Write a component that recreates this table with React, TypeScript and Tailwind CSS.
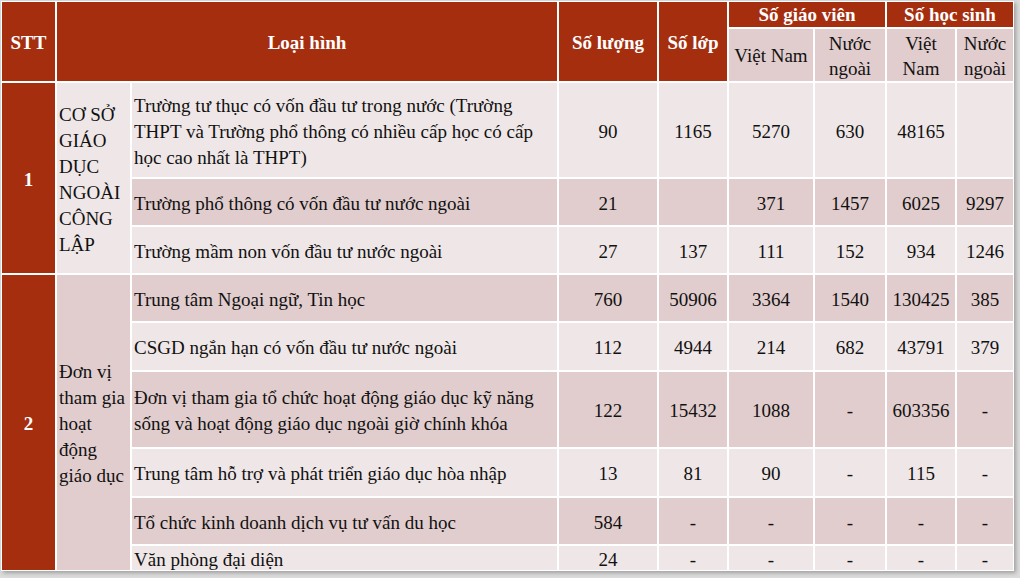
import React from "react";

const RED = "bg-[#a52e0f]";
const LIGHT = "bg-[#efe7e7]";
const DARK = "bg-[#e1cdcd]";

type Row = { name: React.ReactNode; vals: string[]; dark: boolean };

const sec1: Row[] = [
  {
    name: (
      <>
        Trường tư thục có vốn đầu tư trong nước (Trường
        <br />
        THPT và Trường phổ thông có nhiều cấp học có cấp
        <br />
        học cao nhất là THPT)
      </>
    ),
    vals: ["90", "1165", "5270", "630", "48165", ""],
    dark: false,
  },
  { name: "Trường phổ thông có vốn đầu tư nước ngoài", vals: ["21", "", "371", "1457", "6025", "9297"], dark: true },
  { name: "Trường mầm non vốn đầu tư nước ngoài", vals: ["27", "137", "111", "152", "934", "1246"], dark: false },
];

const sec2: Row[] = [
  { name: "Trung tâm Ngoại ngữ, Tin học", vals: ["760", "50906", "3364", "1540", "130425", "385"], dark: true },
  { name: "CSGD ngắn hạn có vốn đầu tư nước ngoài", vals: ["112", "4944", "214", "682", "43791", "379"], dark: false },
  {
    name: (
      <>
        Đơn vị tham gia tổ chức hoạt động giáo dục kỹ năng
        <br />
        sống và hoạt động giáo dục ngoài giờ chính khóa
      </>
    ),
    vals: ["122", "15432", "1088", "-", "603356", "-"],
    dark: true,
  },
  { name: "Trung tâm hỗ trợ và phát triển giáo dục hòa nhập", vals: ["13", "81", "90", "-", "115", "-"], dark: false },
  { name: "Tổ chức kinh doanh dịch vụ tư vấn du học", vals: ["584", "-", "-", "-", "-", "-"], dark: true },
  { name: "Văn phòng đại diện", vals: ["24", "-", "-", "-", "-", "-"], dark: false },
];

function RowCells({ r }: { r: Row }) {
  const bg = r.dark ? DARK : LIGHT;
  return (
    <>
      <div className={`${bg} flex items-center pl-[2px] pt-[3px] whitespace-nowrap`}>
        <span>{r.name}</span>
      </div>
      {r.vals.map((v, i) => (
        <div key={i} className={`${bg} flex items-center justify-center pt-[3px]`}>
          {v}
        </div>
      ))}
    </>
  );
}

export default function App() {
  return (
    <div className="w-[1020px] h-[578px] bg-[#dcdcdc] pt-[1px] pl-[1px] overflow-hidden">
      <div className="inline-grid bg-white p-[1px] gap-[2px] shadow-[2px_2px_4px_rgba(0,0,0,0.28)] grid-cols-[53px_73px_425px_98px_68px_84px_70px_68px_56px] grid-rows-[25px_52px_94px_46px_46px_46px_47px_75px_47px_46px_24px] text-[19px] leading-[26px] text-[#111] font-['Liberation_Serif','Times_New_Roman',serif]">
        {/* Header */}
        <div className={`${RED} row-span-2 flex items-center justify-center pt-[2px] text-white font-bold`}>STT</div>
        <div className={`${RED} row-span-2 col-span-2 flex items-center justify-center pt-[2px] text-white font-bold`}>
          Loại hình
        </div>
        <div className={`${RED} row-span-2 flex items-center justify-center pt-[2px] text-white font-bold`}>Số lượng</div>
        <div className={`${RED} row-span-2 flex items-center justify-center pt-[2px] text-white font-bold`}>Số lớp</div>
        <div className={`${RED} col-span-2 flex items-center justify-center text-white font-bold leading-[22px] pt-[1px]`}>
          Số giáo viên
        </div>
        <div className={`${RED} col-span-2 flex items-center justify-center text-white font-bold leading-[22px] pt-[1px]`}>
          Số học sinh
        </div>
        <div className={`${DARK} flex items-center justify-center text-center pt-[2px]`}>Việt Nam</div>
        <div className={`${DARK} flex items-center justify-center text-center leading-[25px] pt-[2px]`}>
          Nước
          <br />
          ngoài
        </div>
        <div className={`${DARK} flex items-center justify-center text-center leading-[25px] pt-[2px]`}>
          Việt
          <br />
          Nam
        </div>
        <div className={`${DARK} flex items-center justify-center text-center leading-[25px] pt-[2px]`}>
          Nước
          <br />
          ngoài
        </div>

        {/* Section 1 */}
        <div className={`${RED} row-span-3 flex items-center justify-center pt-[3px] text-white font-bold`}>1</div>
        <div className={`${LIGHT} row-span-3 flex items-center pl-[2px] pt-[3px]`}>
          <span>
            CƠ SỞ
            <br />
            GIÁO
            <br />
            DỤC
            <br />
            NGOÀI
            <br />
            CÔNG
            <br />
            LẬP
          </span>
        </div>
        {sec1.map((r, i) => (
          <RowCells key={i} r={r} />
        ))}

        {/* Section 2 */}
        <div className={`${RED} row-span-6 flex items-center justify-center pt-[3px] text-white font-bold`}>2</div>
        <div className={`${DARK} row-span-6 flex items-center pl-[2px] pt-[3px]`}>
          <span>
            Đơn vị
            <br />
            tham gia
            <br />
            hoạt
            <br />
            động
            <br />
            giáo dục
          </span>
        </div>
        {sec2.map((r, i) => (
          <RowCells key={i} r={r} />
        ))}
      </div>
    </div>
  );
}
